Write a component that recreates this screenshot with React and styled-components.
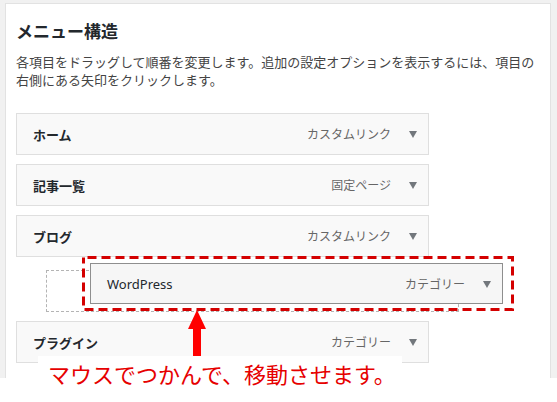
import React from 'react';
import styled, { createGlobalStyle } from 'styled-components';

const GlobalStyle = createGlobalStyle`
  html, body {
    margin: 0;
    padding: 0;
    background: #fff;
  }
  body {
    font-family: "Noto Sans", "Noto Sans CJK JP", sans-serif;
    color: #23282d;
  }
`;

const Page = styled.div`
  position: relative;
  width: 557px;
  height: 402px;
  overflow: hidden;
  background: #fff;
`;

const Backdrop = styled.div`
  box-sizing: border-box;
  height: 378px;
  padding: 3px 6px 0 5px;
  background: #f1f1f1;
`;

const Panel = styled.div`
  box-sizing: border-box;
  height: 100%;
  padding: 16px 10px 0 10px;
  background: #fff;
  border: 1px solid #e2e2e2;
  border-bottom: none;
`;

const Heading = styled.h3`
  margin: 0;
  font-size: 17px;
  line-height: 24px;
  font-weight: 700;
  color: #23282d;
`;

const Description = styled.p`
  margin: 9px 0 0;
  font-size: 13px;
  line-height: 18px;
  color: #444;
`;

const MenuList = styled.div`
  display: flex;
  flex-direction: column;
  margin-top: 24px;
`;

const ItemBar = styled.div`
  box-sizing: border-box;
  display: flex;
  align-items: center;
  width: 413px;
  height: ${(p) => (p.$dragging ? '41px' : '42px')};
  margin-top: ${(p) => p.$gap ?? 0}px;
  padding: 0 11px 0 16px;
  background: ${(p) => (p.$dragging ? '#f6f6f6' : '#f9f9f9')};
  border: 1px solid ${(p) => (p.$dragging ? '#8e8e8e' : '#dfdfdf')};
`;

const ItemTitle = styled.span`
  flex: 1;
  font-size: 13px;
  font-weight: ${(p) => (p.$light ? 400 : 700)};
  color: #23282d;
`;

const ItemType = styled.span`
  font-size: 12px;
  color: #666;
  margin-right: 18px;
`;

const Toggle = styled.span`
  width: 0;
  height: 0;
  border-left: 4px solid transparent;
  border-right: 4px solid transparent;
  border-top: 7px solid #72777c;
  margin-top: 1px;
`;

const Placeholder = styled.div`
  box-sizing: border-box;
  width: 413px;
  height: 42px;
  margin: 13px 0 0 30px;
  border: 1px dashed #b4b4b4;
`;

const DragFrame = styled.div`
  position: absolute;
  left: 82px;
  top: 256px;
  padding: 7px 11px 7px 8px;
`;

const DashOutline = styled.svg`
  position: absolute;
  inset: 0;
  width: 100%;
  height: 100%;
  overflow: visible;
  pointer-events: none;
`;

const Pointer = styled.svg`
  position: absolute;
  left: 188px;
  top: 310px;
`;

const Caption = styled.div`
  position: absolute;
  left: 38px;
  top: 356px;
  width: 364px;
  bottom: 0;
  padding: 2px 0 0 10px;
  box-sizing: border-box;
  background: #fff;
  font-family: "Noto Sans CJK JP", sans-serif;
  font-size: 22px;
  line-height: 30px;
  color: #e60000;
  white-space: nowrap;
`;

const MenuItem = ({ title, type, gap, dragging }) => (
  <ItemBar $gap={gap} $dragging={dragging}>
    <ItemTitle $light={dragging}>{title}</ItemTitle>
    <ItemType>{type}</ItemType>
    <Toggle />
  </ItemBar>
);

export default function App() {
  return (
    <>
      <GlobalStyle />
      <Page>
        <Backdrop>
          <Panel>
            <Heading>メニュー構造</Heading>
            <Description>
              各項目をドラッグして順番を変更します。追加の設定オプションを表示するには、項目の右側にある矢印をクリックします。
            </Description>
            <MenuList>
              <MenuItem title="ホーム" type="カスタムリンク" />
              <MenuItem title="記事一覧" type="固定ページ" gap={9} />
              <MenuItem title="ブログ" type="カスタムリンク" gap={9} />
              <Placeholder />
              <MenuItem title="プラグイン" type="カテゴリー" gap={9} />
            </MenuList>
          </Panel>
        </Backdrop>

        {/* item being dragged, with the red annotation frame */}
        <DragFrame>
          <DashOutline>
            <rect
              x="1.5"
              y="1.5"
              width="calc(100% - 3px)"
              height="calc(100% - 3px)"
              fill="none"
              stroke="#d40000"
              strokeWidth="3"
              strokeDasharray="9 5"
              strokeDashoffset="-4"
            />
          </DashOutline>
          <MenuItem title="WordPress" type="カテゴリー" dragging />
        </DragFrame>

        <Pointer width="18" height="48" viewBox="0 0 18 48">
          <polygon points="9,0 0,19 18,19" fill="#f00" />
          <rect x="5" y="18" width="8" height="30" fill="#f00" />
        </Pointer>

        <Caption>マウスでつかんで、移動させます。</Caption>
      </Page>
    </>
  );
}
